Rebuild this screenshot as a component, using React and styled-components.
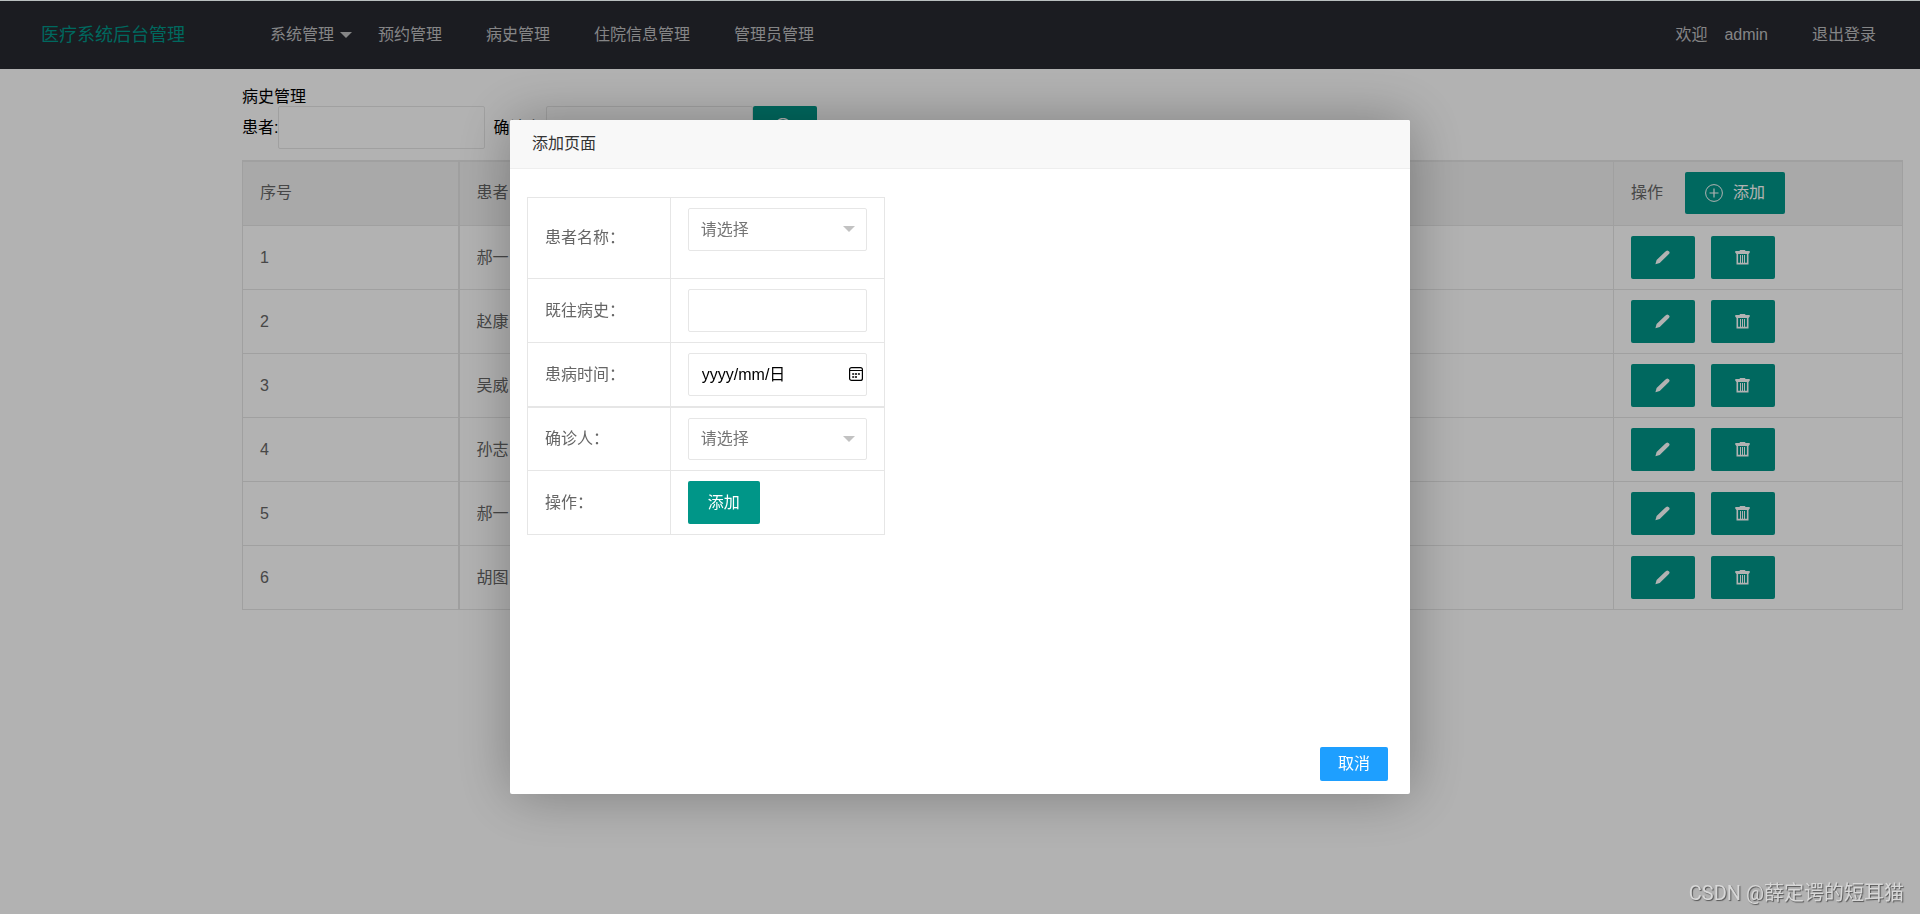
import React, { useState } from 'react'
import styled, { createGlobalStyle } from 'styled-components'

const patients = ['郝一', '赵康', '吴威', '孙志', '郝一', '胡图'];

const menus = [
    { name: '系统管理', more: true },
    { name: '预约管理' },
    { name: '病史管理' },
    { name: '住院信息管理' },
    { name: '管理员管理' },
];

function PencilIcon() {
    return (
        <svg width="18" height="18" viewBox="0 0 18 18" fill="currentColor" aria-hidden="true">
            <path d="M1.4 15.2 2.6 11 10.9 3l1.3-1.1a1.6 1.6 0 0 1 2.2 0l.7.7a1.6 1.6 0 0 1 0 2.2l-1.2 1.3-8.2 7.8z" />
        </svg>
    )
}

function TrashIcon() {
    return (
        <svg width="18" height="18" viewBox="0 0 18 18" fill="none" stroke="currentColor" aria-hidden="true">
            <path d="M6 2.2V1.5h5v.7" />
            <path d="M1.3 2h14.4v1.5l-1 1.4H2.3l-1-1.4z" fill="currentColor" stroke="none" />
            <path d="M3.3 5v9.6h10.4V5" strokeWidth="1.6" />
            <path d="M6.5 6v8M8.5 6v8M10.5 6v8" />
        </svg>
    )
}

function AddIcon() {
    return (
        <svg width="18" height="18" viewBox="0 0 18 18" fill="none" stroke="currentColor" aria-hidden="true">
            <circle cx="9" cy="9" r="8.4" />
            <path d="M9 4.5v9M4.5 9h9" strokeWidth="1.2" />
        </svg>
    )
}

function SearchIcon() {
    return (
        <svg width="20" height="20" viewBox="0 0 20 20" fill="none" stroke="currentColor" strokeWidth="1.4" aria-hidden="true">
            <circle cx="8" cy="7.5" r="7" />
            <path d="m13 12.7 5 5" />
        </svg>
    )
}

function CalendarIcon() {
    return (
        <svg width="14" height="14" viewBox="0 0 14 14" fill="none" stroke="currentColor" aria-hidden="true">
            <rect x=".6" y=".6" width="12.8" height="12.8" rx="2" strokeWidth="1.2" />
            <path d="M1 3.5h12" />
            <path d="M3.2 7h2M6 7h2M8.9 7h2M3.2 10h2M6 10h2" strokeWidth="1.6" />
        </svg>
    )
}

function Header() {
    return (
        <TopBar>
            <Logo>医疗系统后台管理</Logo>
            <Nav>
                {menus.map((m) => (
                    <NavLink href="#" key={m.name}>
                        {m.name}
                        {m.more && <Caret />}
                    </NavLink>
                ))}
            </Nav>
            <Nav>
                <NavLink href="#"><Welcome>欢迎</Welcome>admin</NavLink>
                <NavLink href="#">退出登录</NavLink>
            </Nav>
        </TopBar>
    )
}

function History({ onAdd }) {
    return (
        <Main>
            <PageName>病史管理</PageName>
            <Search onSubmit={(e) => e.preventDefault()}>
                <label htmlFor="patient">患者:</label>
                <SearchInput id="patient" />
                <NextLabel htmlFor="doctor">确诊人:</NextLabel>
                <SearchInput id="doctor" />
                <Button aria-label="搜索"><SearchIcon /></Button>
            </Search>
            <DataTable>
                <thead>
                    <tr>
                        <IndexHead>序号</IndexHead>
                        <th>患者</th>
                        <ActionHead>
                            <Actions $gap="22px">
                                操作
                                <Button type="button" $short onClick={onAdd}><AddIcon />添加</Button>
                            </Actions>
                        </ActionHead>
                    </tr>
                </thead>
                <tbody>
                    {patients.map((name, i) => (
                        <tr key={i}>
                            <td>{i + 1}</td>
                            <td>{name}</td>
                            <td>
                                <Actions $gap="16px">
                                    <Button type="button" aria-label="编辑"><PencilIcon /></Button>
                                    <Button type="button" aria-label="删除"><TrashIcon /></Button>
                                </Actions>
                            </td>
                        </tr>
                    ))}
                </tbody>
            </DataTable>
        </Main>
    )
}

function AddDialog({ onClose }) {
    return (
        <Shade>
            <Dialog role="dialog" aria-labelledby="dialog-title">
                <DialogTitle id="dialog-title">添加页面</DialogTitle>
                <DialogBody>
                    <FormTable>
                        <tbody>
                            <tr>
                                <th><label htmlFor="name">患者名称：</label></th>
                                <td>
                                    <SelectBox $bottom="17px">
                                        <Select id="name"><option>请选择</option></Select>
                                    </SelectBox>
                                </td>
                            </tr>
                            <tr>
                                <th><label htmlFor="past">既往病史：</label></th>
                                <td><Input id="past" /></td>
                            </tr>
                            <ThickRow>
                                <th><label htmlFor="date">患病时间：</label></th>
                                <td>
                                    <DateBox>
                                        <DateInput id="date" defaultValue="yyyy/mm/日" />
                                        <DateButton type="button" aria-label="选择日期"><CalendarIcon /></DateButton>
                                    </DateBox>
                                </td>
                            </ThickRow>
                            <tr>
                                <th><label htmlFor="confirm">确诊人：</label></th>
                                <td>
                                    <SelectBox>
                                        <Select id="confirm" $short><option>请选择</option></Select>
                                    </SelectBox>
                                </td>
                            </tr>
                            <tr>
                                <th>操作：</th>
                                <td><Button type="button">添加</Button></td>
                            </tr>
                        </tbody>
                    </FormTable>
                </DialogBody>
                <DialogFoot>
                    <CancelButton type="button" onClick={onClose}>取消</CancelButton>
                </DialogFoot>
            </Dialog>
        </Shade>
    )
}

function App() {
    const [open, setOpen] = useState(true);

    return (
        <>
            <GlobalStyle />
            <Header />
            <History onAdd={() => setOpen(true)} />
            {open && <AddDialog onClose={() => setOpen(false)} />}
            <Watermark>CSDN @薛定谔的短耳猫</Watermark>
        </>
    )
}

export default App

const GlobalStyle = createGlobalStyle`
    * {
        box-sizing: border-box;
    }
    body {
        margin: 0;
        background: #fff;
        color: #000;
    }
    body, button, input, select {
        font: 16px/20px "Liberation Sans", "Noto Sans CJK SC", sans-serif;
    }
`
const TopBar = styled.header`
    display: flex;
    align-items: center;
    height: 69px;
    padding-right: 22px;
    border-top: 1px solid #b9bfbf;
    background: #272930;
`
const Logo = styled.div`
    width: 248px;
    padding-left: 41px;
    font-size: 18px;
    color: #009688;
`
const Nav = styled.nav`
    display: flex;
    &:last-child {
        margin-left: auto;
    }
`
const NavLink = styled.a`
    position: relative;
    padding: 0 22px;
    color: #bfbfc0;
    text-decoration: none;
`
const Caret = styled.i`
    position: absolute;
    top: 7px;
    right: 4px;
    border: 6px solid transparent;
    border-top-color: #bfbfc0;
    border-bottom: 0;
`
const Welcome = styled.span`
    margin-right: 17px;
`
const Main = styled.main`
    padding: 19px 17px 17px 242px;
`
const PageName = styled.div`
    line-height: 18px;
`
const Search = styled.form`
    display: flex;
    align-items: center;
    margin-bottom: 11px;
`
const NextLabel = styled.label`
    margin-left: 8px;
`
const Input = styled.input`
    display: block;
    width: 100%;
    height: 43px;
    padding: 0 11px;
    border: 1px solid #e6e6e6;
    border-radius: 2px;
    background: #fff;
    color: #000;
`
const SearchInput = styled(Input)`
    width: 207px;
`
const Button = styled.button`
    display: inline-flex;
    align-items: center;
    justify-content: center;
    gap: 10px;
    min-width: 64px;
    height: ${(p) => (p.$short ? '42px' : '43px')};
    padding: 0 20px;
    border: 0;
    border-radius: 2px;
    background: #009688;
    color: #fff;
    cursor: pointer;
`
const DataTable = styled.table`
    width: 100%;
    border-collapse: collapse;
    color: #666;
    th, td {
        padding: 10px 17px;
        border: 1px solid #e6e6e6;
        text-align: left;
        font-weight: 400;
    }
    th {
        padding-bottom: 11px;
        border-top-width: 2px;
        background: #f2f2f2;
    }
    th:first-child, td:first-child {
        border-right-width: 2px;
    }
`
const IndexHead = styled.th`
    width: 216px;
`
const ActionHead = styled.th`
    width: 289px;
`
const Actions = styled.div`
    display: flex;
    align-items: center;
    gap: ${(p) => p.$gap};
`
const Shade = styled.div`
    position: fixed;
    inset: 1px 0 0;
    display: flex;
    align-items: center;
    justify-content: center;
    padding-bottom: 1px;
    background: rgba(0, 0, 0, 0.3);
`
const Dialog = styled.section`
    display: flex;
    flex-direction: column;
    width: min(900px, 94vw);
    min-height: 674px;
    border-radius: 2px;
    background: #fff;
    box-shadow: 1px 1px 56px rgba(0, 0, 0, 0.3);
`
const DialogTitle = styled.h2`
    margin: 0;
    padding: 14px 22px;
    border-bottom: 1px solid #eee;
    border-radius: 2px 2px 0 0;
    background: #f8f8f8;
    color: #333;
    font-size: 16px;
    font-weight: 400;
`
const DialogBody = styled.div`
    flex: 1;
    padding: 28px 17px;
`
const FormTable = styled.table`
    width: 358px;
    border-collapse: collapse;
    color: #666;
    th, td {
        padding: 10px 17px;
        border: 1px solid #e6e6e6;
        text-align: left;
        font-weight: 400;
    }
    th {
        width: 40%;
    }
`
const ThickRow = styled.tr`
    th, td {
        border-bottom-width: 2px;
    }
`
const SelectBox = styled.div`
    position: relative;
    margin-bottom: ${(p) => p.$bottom || 0};
    &::after {
        content: '';
        position: absolute;
        top: 18px;
        right: 12px;
        border: 6px solid transparent;
        border-top-color: #c2c2c2;
        border-bottom: 0;
        pointer-events: none;
    }
`
const Select = styled.select`
    display: block;
    width: 100%;
    height: ${(p) => (p.$short ? '42px' : '43px')};
    padding: 0 12px;
    border: 1px solid #e6e6e6;
    border-radius: 2px;
    background: #fff;
    color: #757575;
    appearance: none;
`
const DateBox = styled.div`
    position: relative;
`
const DateInput = styled(Input)`
    padding: 0 28px 3px 13px;
`
const DateButton = styled.button`
    position: absolute;
    top: 14px;
    right: 4px;
    display: flex;
    padding: 0;
    border: 0;
    background: none;
    color: #000;
    cursor: pointer;
`
const DialogFoot = styled.div`
    display: flex;
    justify-content: flex-end;
    padding: 0 22px 13px;
`
const CancelButton = styled(Button)`
    height: 34px;
    padding: 0 18px;
    background: #1e9fff;
`
const Watermark = styled.div`
    position: fixed;
    right: 16px;
    bottom: 8px;
    font: 20px/26px Roboto, "Noto Sans CJK SC", sans-serif;
    color: #d8d8d8;
    text-shadow: 1px 1px 1px #555;
`
